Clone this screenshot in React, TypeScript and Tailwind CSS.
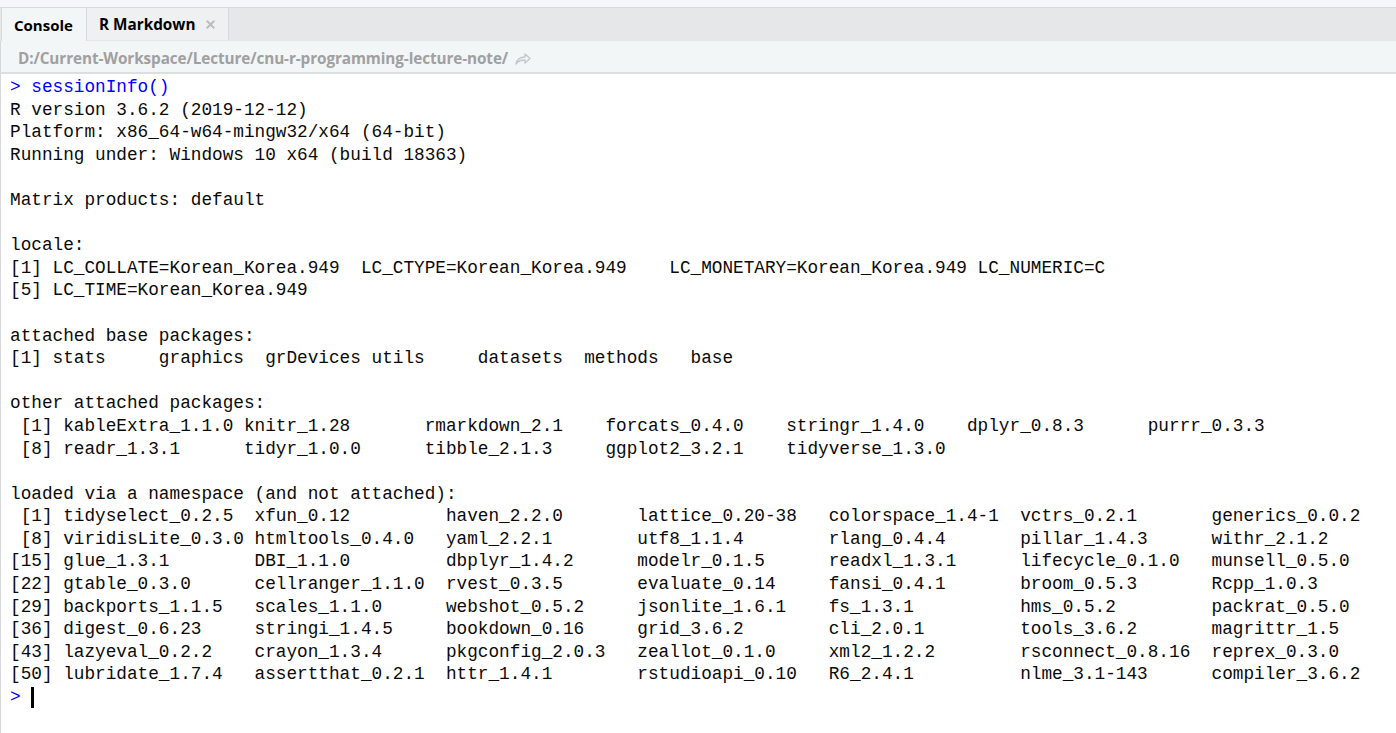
import React from 'react';
import { X } from 'lucide-react';

const namespaceRows: [string, string[]][] = [
  [' [1]', ['tidyselect_0.2.5', 'xfun_0.12', 'haven_2.2.0', 'lattice_0.20-38', 'colorspace_1.4-1', 'vctrs_0.2.1', 'generics_0.0.2']],
  [' [8]', ['viridisLite_0.3.0', 'htmltools_0.4.0', 'yaml_2.2.1', 'utf8_1.1.4', 'rlang_0.4.4', 'pillar_1.4.3', 'withr_2.1.2']],
  ['[15]', ['glue_1.3.1', 'DBI_1.1.0', 'dbplyr_1.4.2', 'modelr_0.1.5', 'readxl_1.3.1', 'lifecycle_0.1.0', 'munsell_0.5.0']],
  ['[22]', ['gtable_0.3.0', 'cellranger_1.1.0', 'rvest_0.3.5', 'evaluate_0.14', 'fansi_0.4.1', 'broom_0.5.3', 'Rcpp_1.0.3']],
  ['[29]', ['backports_1.1.5', 'scales_1.1.0', 'webshot_0.5.2', 'jsonlite_1.6.1', 'fs_1.3.1', 'hms_0.5.2', 'packrat_0.5.0']],
  ['[36]', ['digest_0.6.23', 'stringi_1.4.5', 'bookdown_0.16', 'grid_3.6.2', 'cli_2.0.1', 'tools_3.6.2', 'magrittr_1.5']],
  ['[43]', ['lazyeval_0.2.2', 'crayon_1.3.4', 'pkgconfig_2.0.3', 'zeallot_0.1.0', 'xml2_1.2.2', 'rsconnect_0.8.16', 'reprex_0.3.0']],
  ['[50]', ['lubridate_1.7.4', 'assertthat_0.2.1', 'httr_1.4.1', 'rstudioapi_0.10', 'R6_2.4.1', 'nlme_3.1-143', 'compiler_3.6.2']],
];

const lines: string[] = [
  'R version 3.6.2 (2019-12-12)',
  'Platform: x86_64-w64-mingw32/x64 (64-bit)',
  'Running under: Windows 10 x64 (build 18363)',
  '',
  'Matrix products: default',
  '',
  'locale:',
  '[1] LC_COLLATE=Korean_Korea.949  LC_CTYPE=Korean_Korea.949    LC_MONETARY=Korean_Korea.949 LC_NUMERIC=C',
  '[5] LC_TIME=Korean_Korea.949',
  '',
  'attached base packages:',
  '[1] stats     graphics  grDevices utils     datasets  methods   base',
  '',
  'other attached packages:',
  ' [1] kableExtra_1.1.0 knitr_1.28       rmarkdown_2.1    forcats_0.4.0    stringr_1.4.0    dplyr_0.8.3      purrr_0.3.3',
  ' [8] readr_1.3.1      tidyr_1.0.0      tibble_2.1.3     ggplot2_3.2.1    tidyverse_1.3.0',
  '',
  'loaded via a namespace (and not attached):',
  ...namespaceRows.map(([idx, pkgs]) => idx + ' ' + pkgs.map((p) => p.padEnd(17) + ' ').join('').trimEnd()),
];

function ForwardArrow() {
  return (
    <svg width="16" height="13" viewBox="0 0 16 13" fill="none" stroke="#c4c7ca" strokeWidth="1.4" strokeLinejoin="round">
      <path d="M1 12 C2 7 5 5 10 5 L10 2 L15 6.5 L10 11 L10 8 C6 8 3 9 1 12 Z" />
    </svg>
  );
}

export default function App() {
  return (
    <div className="w-[1396px] h-[733px] bg-white overflow-hidden flex flex-col">
      <div className="h-2 bg-[#f5f6f8] border-b border-[#d6d8db]" />
      <div className="h-[33px] bg-[#e6e7e9] flex items-end pl-px font-['Open_Sans',sans-serif]">
        <div className="h-[33px] w-[86px] bg-[#f3f6f7] border-l border-r border-[#d6d8db] flex items-center pl-[12px] pt-px text-[15px] font-bold text-black">
          Console
        </div>
        <div className="h-[32px] w-[142px] mb-px bg-[#eff0f1] border-r border-[#d6d8db] flex items-center pl-[12px] pt-px gap-[9px] text-[15.3px] font-bold text-black">
          R Markdown
          <X className="w-[13px] h-[13px] text-[#bcbcbc]" strokeWidth={3.5} />
        </div>
      </div>
      <div className="h-[33px] bg-[#f3f6f7] border-l border-[#d6d8db] border-b-2 border-b-[#dcdfe1] flex items-center pl-[17px] pt-[3px] gap-[7px]">
        <span className="text-[15.3px] font-bold text-[#a0a0a0] font-['Open_Sans',sans-serif] tracking-[-0.1px]">
          D:/Current-Workspace/Lecture/cnu-r-programming-lecture-note/
        </span>
        <ForwardArrow />
      </div>
      <div className="flex-1 border-l border-[#d6d8db] pl-[9px] pt-[2px] font-['Liberation_Mono',monospace] text-[17.73px] leading-[22.6px] text-[#0a0a0a]">
        <div className="whitespace-pre text-[#0000ff]">{'> sessionInfo()'}</div>
        {lines.map((l, i) => (
          <div key={i} className="whitespace-pre h-[22.6px]">{l}</div>
        ))}
        <div className="whitespace-pre flex items-center h-[22.6px]">
          <span className="text-[#0000ff]">{'> '}</span>
          <span className="w-[3px] h-[21px] bg-black" />
        </div>
      </div>
    </div>
  );
}
